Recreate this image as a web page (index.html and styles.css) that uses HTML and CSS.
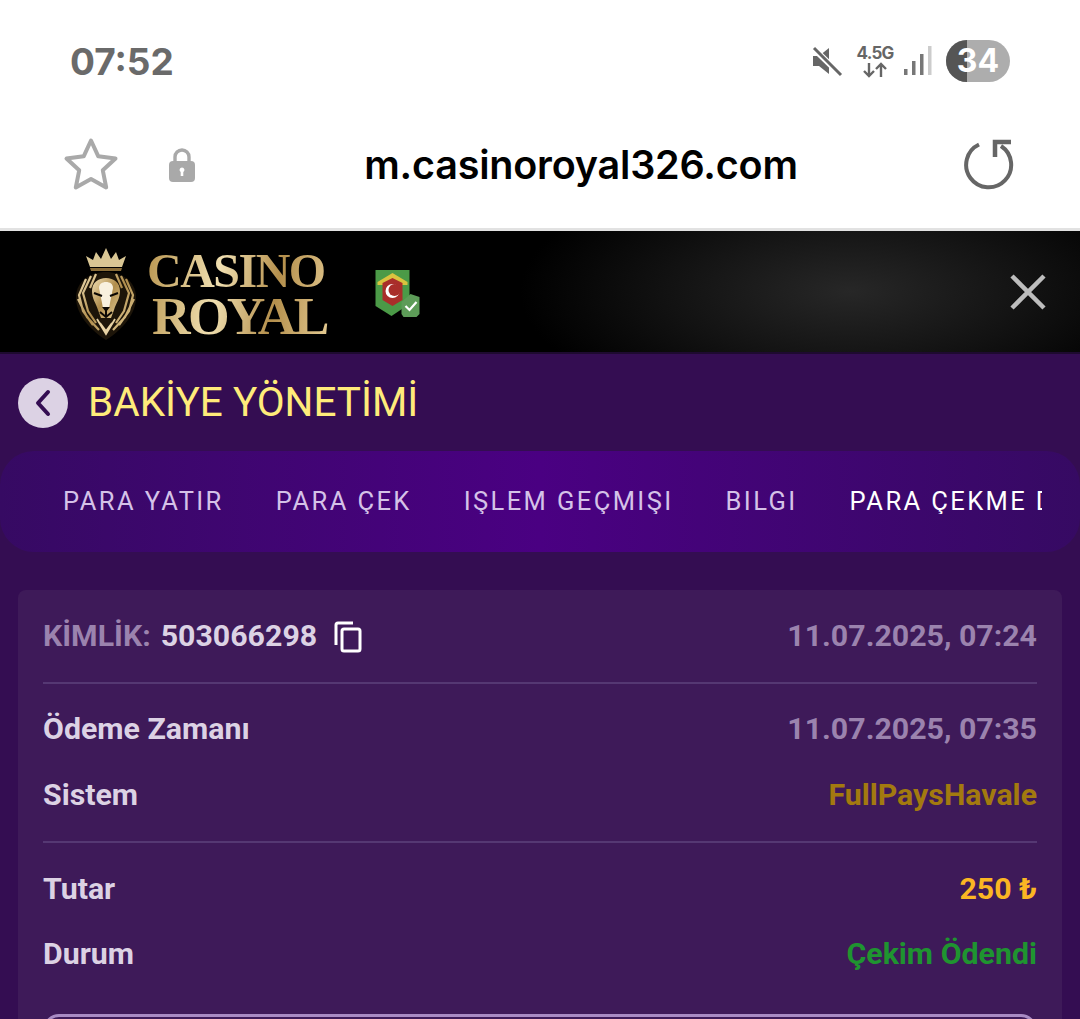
FILE: index.html
```html
<!DOCTYPE html>
<html lang="tr">
<head>
<meta charset="utf-8">
<title>Casino Royal</title>
<link rel="stylesheet" href="styles.css">
</head>
<body>
<div class="status">
  <span class="time">07:52</span>
  <div class="status-icons">
    <svg class="mute" width="32" height="32" viewBox="0 0 32 32"><path d="M2 11h6l10-8v26l-10-8H2z" fill="#666"/><path d="M2 3l28 27" stroke="#fff" stroke-width="6"/><path d="M3 3l27 27" stroke="#666" stroke-width="3"/></svg>
    <div class="net"><span class="net-label">4.5G</span>
      <svg width="26" height="16" viewBox="0 0 26 16"><path d="M7 1v13M2 9l5 5 5-5M19 15V2M14 7l5-5 5 5" fill="none" stroke="#666" stroke-width="2.400"/></svg>
    </div>
    <svg class="signal" width="28" height="30" viewBox="0 0 28 30"><rect x="0" y="23" width="3.500" height="6" fill="#777"/><rect x="8" y="15" width="3.500" height="14" fill="#777"/><rect x="16" y="8" width="3.500" height="21" fill="#777"/><rect x="24" y="0" width="3.500" height="29" fill="#ccc"/></svg>
    <div class="battery"><span class="battery-fill"></span><span class="battery-num">34</span></div>
  </div>
</div>
<div class="urlbar">
  <svg class="star" width="56" height="56" viewBox="0 0 56 56"><path d="M28 3.500l7.300 15.800 17.200 2.200-12.700 11.800 3.400 17.100L28 41.900l-15.200 8.500 3.400-17.100L3.500 21.500l17.200-2.200z" fill="none" stroke="#a9a9a9" stroke-width="4" stroke-linejoin="round"/></svg>
  <svg class="lock" width="28" height="36" viewBox="0 0 28 36"><path d="M7 15V10a7 7 0 0 1 14 0v5" fill="none" stroke="#a9a9a9" stroke-width="3.400"/><rect x="1" y="14" width="26" height="21" rx="4" fill="#a9a9a9"/><path d="M14 20.500a2.500 2.500 0 0 1 1.300 4.600V29h-2.600v-3.900A2.500 2.500 0 0 1 14 20.500z" fill="#fff"/></svg>
  <span class="url">m.casinoroyal326.com</span>
  <svg class="reload" width="52" height="52" viewBox="0 0 52 52"><path d="M17 6.500A22.500 22.500 0 1 0 39 8" fill="none" stroke="#666" stroke-width="4"/><path d="M49 4H33v15" fill="none" stroke="#666" stroke-width="4.500"/></svg>
</div>
<header class="brand">
  <svg class="lion" width="62" height="94" viewBox="0 0 62 94">
    <defs><linearGradient id="gold" x1="0" x2="1" y1="0" y2="1"><stop offset="0" stop-color="#f0dfb4"/><stop offset=".5" stop-color="#b08d4c"/><stop offset="1" stop-color="#e6cf98"/></linearGradient></defs>
    <path d="M15 20L11 9l7 4 3-8 5 7 5-11 5 11 5-7 3 8 7-4-4 11z" fill="#d9c694"/>
    <path d="M15 21h32l-1 3H16z" fill="#8a6d38"/>
    <path d="M31 25C15 25 2 34 1 49c-1 17 14 34 30 44 16-10 31-27 30-44C60 34 47 25 31 25z" fill="#1d1509"/>
    <path d="M11 32L4 48l4 16 10 14M51 32l7 16-4 16-10 14M16 29L8 46l5 18 8 12M46 29l8 17-5 18-8 12M21 27l-6 14M41 27l6 14M3 52l9 18 12 13M59 52l-9 18-12 13" stroke="url(#gold)" stroke-width="2.200" fill="none"/>
    <path d="M31 31c-8 0-14 5-14 13 0 8 4 12 6 19l3 8h10l3-8c2-7 6-11 6-19 0-8-6-13-14-13z" fill="url(#gold)"/>
    <path d="M31 35c-4 0-7 2-7 6l4 20h6l4-20c0-4-3-6-7-6z" fill="#f8f1df"/>
    <path d="M19 46l8 3M43 46l-8 3M25 65l6 5 6-5M31 62v8" stroke="#0c0804" stroke-width="2" fill="none"/>
    <path d="M27 60h8l-4 5z" fill="#0c0804"/>
    <path d="M25 76l6 8 6-8M22 72l9 15 9-15" stroke="#e8d3a4" stroke-width="1.800" fill="none"/>
  </svg>
  <div class="wordmark"><span class="word-a">CASINO</span><span class="word-b">ROYAL</span></div>
  <svg class="badge" width="47" height="50" viewBox="0 0 46 50">
    <path d="M1 2h34v34l-18 12L1 38z" fill="#4b9a47"/>
    <path d="M3 14L18 5l15 9v3H3z" fill="#d9c33f"/>
    <path d="M8 15l10-5 10 5v17l-10 6-10-6z" fill="#a92e2a"/>
    <circle cx="18" cy="23" r="7" fill="#fff"/><circle cx="20" cy="22" r="6" fill="#a92e2a"/>
    <path d="M27 34l9-8 9 3v17l-3 3H29l-2-3z" fill="#5d9c58"/>
    <path d="M31 38l4 4 7-8" stroke="#fff" stroke-width="2.200" fill="none"/>
  </svg>
  <svg class="close" width="38" height="38" viewBox="0 0 38 38"><path d="M3 3l32 32M35 3L3 35" stroke="#bdbdbd" stroke-width="4.500"/></svg>
</header>
<main class="page">
  <div class="title-row">
    <span class="back"><svg width="18" height="28" viewBox="0 0 18 28"><path d="M14 3L4 14l10 11" fill="none" stroke="#340d52" stroke-width="4" stroke-linecap="round" stroke-linejoin="round"/></svg></span>
    <h1 class="title">BAKİYE YÖNETİMİ</h1>
  </div>
  <nav class="tabs">
    <div class="tabs-inner">
      <span class="tab">PARA YATIR</span>
      <span class="tab">PARA ÇEK</span>
      <span class="tab">IŞLEM GEÇMIŞI</span>
      <span class="tab">BILGI</span>
      <span class="tab tab-active">PARA ÇEKME DETAYLARI</span>
    </div>
  </nav>
  <section class="card">
    <div class="row row-id">
      <div class="id"><span class="id-label">KİMLİK:</span><span class="id-value">503066298</span>
        <svg class="copy" width="28" height="32" viewBox="0 0 28 32"><path d="M19 2H4a2 2 0 0 0-2 2v20" fill="none" stroke="#fff" stroke-width="3"/><rect x="8" y="8" width="18" height="22" rx="2" fill="none" stroke="#fff" stroke-width="3"/></svg>
      </div>
      <span class="muted">11.07.2025, 07:24</span>
    </div>
    <div class="block block-time">
      <div class="row"><span class="label">Ödeme Zamanı</span><span class="muted">11.07.2025, 07:35</span></div>
      <div class="row"><span class="label">Sistem</span><span class="system">FullPaysHavale</span></div>
    </div>
    <div class="block">
      <div class="row"><span class="label">Tutar</span><span class="amount">250 ₺</span></div>
      <div class="row"><span class="label">Durum</span><span class="paid">Çekim Ödendi</span></div>
    </div>
    <div class="box"></div>
  </section>
</main>
</body>
</html>
```
FILE: styles.css
```css
* { box-sizing: border-box; }
html, body { margin: 0; height: 1019px; overflow: hidden; }
body { background: #340d52; font-family: Roboto, "Noto Sans", sans-serif; display: flex; flex-direction: column; }

.status { flex: none; height: 122px; background: #fff; display: flex; justify-content: space-between; align-items: center; padding: 0 70px; }
.time { font: 700 37px/1 Inter, Roboto, sans-serif; color: #6a6a6a; }
.status-icons { display: flex; align-items: center; }
.mute { margin-right: 14px; margin-left: 1px; }
.net { display: flex; flex-direction: column; align-items: center; width: 36px; margin-right: 11px; }
.net-label { font: 700 17px/17px Inter, Roboto, sans-serif; color: #666; letter-spacing: -.8px; }
.signal { margin-right: 14px; }
.battery { position: relative; width: 64px; height: 42px; border-radius: 21px; background: #adadad; overflow: hidden; display: flex; align-items: center; justify-content: center; }
.battery-fill { position: absolute; left: 0; top: 0; bottom: 0; width: 21px; background: #555; }
.battery-num { position: relative; font: 700 32px/1 Inter, Roboto, sans-serif; color: #fff; }

.urlbar { flex: none; height: 106px; background: #fff; display: flex; align-items: center; padding: 0 66px 22px 63px; }
.star { flex: none; margin-top: 2px; }
.lock { flex: none; margin-left: 49px; margin-top: 2px; }
.url { flex: 1; text-align: center; font: 600 39.500px/1 Inter, Roboto, sans-serif; color: #000; white-space: nowrap; letter-spacing: -.2px; padding: 3px 0 0 4px; }
.reload { flex: none; }

.brand { flex: none; height: 126px; display: flex; align-items: center; padding: 0 33px 0 75px; border-top: 3px solid #e2e2e2; border-bottom: 2px solid #1e0a30; background: radial-gradient(ellipse 330px 130px at 850px 50%, #272727 0%, #121212 55%, #000 100%); }
.lion { flex: none; margin-top: 4px; }
.wordmark { display: flex; flex-direction: column; align-items: flex-start; width: 186px; margin-left: 10px; font-family: "Liberation Serif", serif; font-weight: 700; background: linear-gradient(100deg, #b8954f 0%, #f0dfb0 38%, #b48f4c 68%, #e8cf98 100%); -webkit-background-clip: text; background-clip: text; color: transparent; padding-top: 4px; }
.word-a { font-size: 48px; line-height: 45px; letter-spacing: -1.500px; }
.word-b { font-size: 53.500px; line-height: 46px; letter-spacing: -2.700px; margin-left: 5px; }
.badge { flex: none; margin-left: 41px; margin-top: 2px; }
.close { flex: none; margin-left: auto; }

.page { flex: 1; min-height: 0; overflow: hidden; }
.title-row { height: 97px; display: flex; align-items: center; padding-left: 18px; gap: 20px; }
.back { width: 50px; height: 50px; border-radius: 50%; background: #dcd2e4; display: flex; align-items: center; justify-content: center; }
.title { margin: 0; font: 400 40.500px/1 Roboto, sans-serif; color: #ffeb7a; }
.tabs { height: 101px; border-radius: 34px; background: linear-gradient(90deg, #360a63 0%, #4a0082 50%, #360a63 100%); padding: 0 38px; overflow: hidden; display: flex; align-items: center; }
.tabs-inner { display: flex; width: 100%; overflow: hidden; white-space: nowrap; padding-left: 25px; gap: 52px; }
.tab { flex: none; font: 400 25.500px/1 Roboto, sans-serif; letter-spacing: 2.400px; color: #d5c2e8; }
.tab-active { color: #fff; }

.card { margin: 38px 18px 0; padding: 0 25px; background: #3e1a59; border-radius: 8px; height: 600px; }
.row { display: flex; justify-content: space-between; align-items: center; }
.row-id { height: 94px; border-bottom: 2px solid #553873; }
.id { display: flex; align-items: center; }
.id-label { font: 700 30.300px/1 Roboto, sans-serif; color: #9b83ae; margin-right: 10px; }
.id-value { font: 700 30.300px/1 Roboto, sans-serif; color: #dcd2e4; margin-right: 17px; }
.copy { flex: none; margin-top: 2px; }
.muted { font: 700 30.300px/1 Roboto, sans-serif; color: #9b83ae; }
.label { font: 700 30.300px/1 Roboto, sans-serif; color: #dcd2e4; }
.system { font: 700 30.300px/1 Roboto, sans-serif; color: #a37a0f; }
.amount { font: 700 30.300px/1 Roboto, sans-serif; color: #fbb623; }
.paid { font: 700 30.300px/1 Roboto, sans-serif; color: #1f9430; }
.block { padding: 14px 0 13px; }
.block .row { height: 65px; }
.block-time { height: 159px; padding: 12px 0 0; border-bottom: 2px solid #553873; }
.block-time .row { height: 66px; }
.box { height: 100px; margin-top: 14px; border: 3px solid #a98bc4; border-radius: 16px; }
```
